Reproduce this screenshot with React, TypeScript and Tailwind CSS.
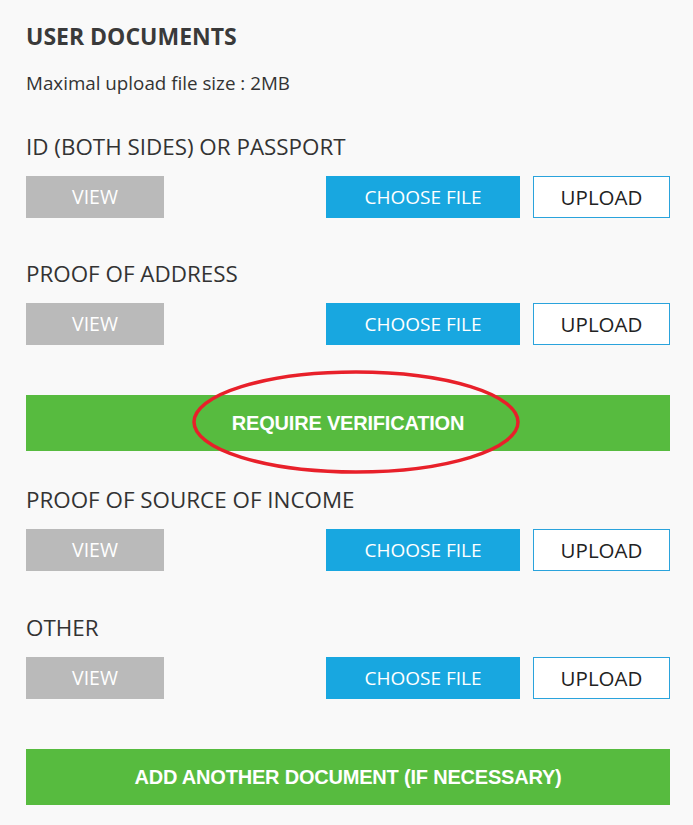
import type { ReactNode } from "react";

const font = { fontFamily: '"Open Sans", "Noto Sans", sans-serif' };

type DocRowProps = {
  label: string;
};

function DocRow({ label }: DocRowProps) {
  return (
    <div className="flex flex-col">
      <div className="h-[30px] text-[22.4px] leading-[30px] text-[#333]">{label}</div>
      <div className="mt-[14px] flex h-[42px] items-stretch justify-between">
        <button className="w-[138px] bg-[#bababa] text-[19.5px] text-white">VIEW</button>
        <div className="flex gap-[13px]">
          <button className="w-[194px] bg-[#18a7e0] text-[19px] text-white">CHOOSE FILE</button>
          <button className="w-[137px] border border-[#2aa3dc] bg-white text-[20.5px] text-[#222]">
            UPLOAD
          </button>
        </div>
      </div>
    </div>
  );
}

function GreenButton({ children }: { children: ReactNode }) {
  return (
    <button
      className="h-[56px] w-full bg-[#57bb3f] text-[20px] font-bold tracking-[-0.2px] text-white"
      style={{ fontFamily: '"Liberation Sans", Arial, sans-serif' }}
    >
      {children}
    </button>
  );
}

export default function App() {
  return (
    <div className="relative min-h-[825px] w-[693px] bg-[#f9f9f9] pl-[26px] pr-[23px] pt-[22px]" style={font}>
      <h2 className="h-[28px] text-[23px] font-bold leading-[28px] text-[#3a3a3a]">USER DOCUMENTS</h2>
      <p className="mt-[21px] h-[24px] text-[18.8px] leading-[24px] text-[#333]">
        Maximal upload file size : 2MB
      </p>

      <div className="mt-[37px]">
        <DocRow label="ID (BOTH SIDES) OR PASSPORT" />
      </div>
      <div className="mt-[41px]">
        <DocRow label="PROOF OF ADDRESS" />
      </div>

      <div className="relative mt-[50px]">
        <GreenButton>REQUIRE VERIFICATION</GreenButton>
        {/* red annotation circle drawn over the button */}
        <svg
          className="pointer-events-none absolute left-[165px] top-[-26px]"
          width="330"
          height="106"
          viewBox="0 0 330 106"
        >
          <ellipse cx="165" cy="53" rx="162" ry="50" fill="none" stroke="#e8202a" strokeWidth="3.5" />
        </svg>
      </div>

      <div className="mt-[34px]">
        <DocRow label="PROOF OF SOURCE OF INCOME" />
      </div>
      <div className="mt-[42px]">
        <DocRow label="OTHER" />
      </div>

      <div className="mt-[50px]">
        <GreenButton>ADD ANOTHER DOCUMENT (IF NECESSARY)</GreenButton>
      </div>
    </div>
  );
}
